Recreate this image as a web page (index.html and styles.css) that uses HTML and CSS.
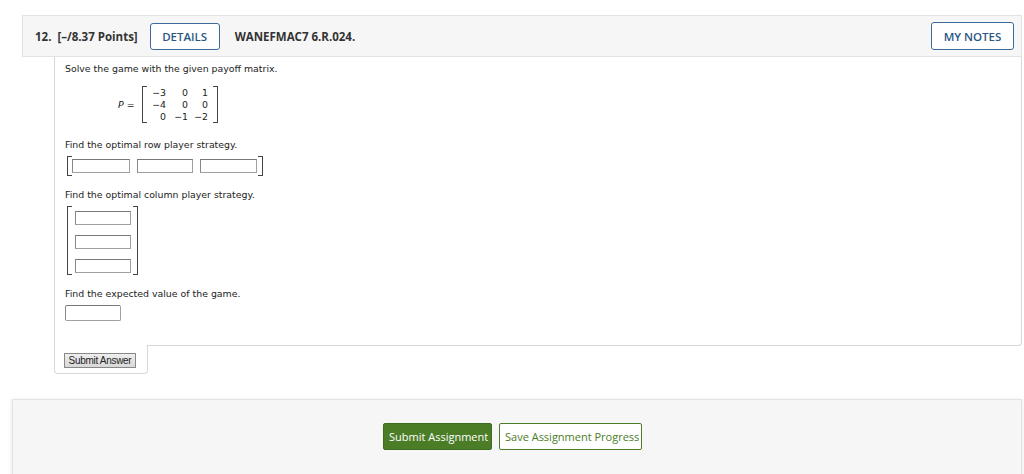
FILE: index.html
```html
<!DOCTYPE html>
<html lang="en">
  <head>
    <meta charset="UTF-8" />
    <title>WANEFMAC7 6.R.024.</title>
    <link rel="stylesheet" href="styles.css">
  </head>
  <body>
    <div class="question">
      <div class="q-header">
        <span class="q-num">12.</span>
        <span class="q-points">[&ndash;/8.37 Points]</span>
        <button class="btn-outline">DETAILS</button>
        <span class="q-code">WANEFMAC7 6.R.024.</span>
        <button class="btn-outline notes">MY NOTES</button>
      </div>

      <div class="q-body">
        <p class="q-text">Solve the game with the given payoff matrix.</p>

        <div class="payoff">
          <span class="payoff-label"><i>P</i> =</span>
          <div class="bracket payoff-matrix">
            <span>&minus;3</span><span>0</span><span>1</span>
            <span>&minus;4</span><span>0</span><span>0</span>
            <span>0</span><span>&minus;1</span><span>&minus;2</span>
          </div>
        </div>

        <p class="q-text gap-lg">Find the optimal row player strategy.</p>
        <div class="bracket row-vec">
          <input type="text" class="cell" />
          <input type="text" class="cell" />
          <input type="text" class="cell" />
        </div>

        <p class="q-text gap-md">Find the optimal column player strategy.</p>
        <div class="bracket col-vec">
          <input type="text" class="cell" />
          <input type="text" class="cell" />
          <input type="text" class="cell" />
        </div>

        <p class="q-text gap-md">Find the expected value of the game.</p>
        <input type="text" class="cell single" />
      </div>
      <div class="q-submit">
        <button class="btn-classic">Submit Answer</button>
      </div>
    </div>

    <div class="footer-bar">
      <button class="btn-green">Submit Assignment</button>
      <button class="btn-green-outline">Save Assignment Progress</button>
    </div>
  </body>
</html>
```

FILE: styles.css
```css
* {
  margin: 0;
  padding: 0;
  box-sizing: border-box;
}

body {
  font-family: "Open Sans", sans-serif;
  background: #fff;
  color: #333;
  height: 474px;
  overflow: hidden;
  padding-top: 15px;
}

.question {
  margin-left: 22px;
  width: 1000px;
}

.q-header {
  display: flex;
  align-items: center;
  height: 42px;
  padding: 0 7px 0 12px;
  background: #f6f6f6;
  border: 1px solid #e3e3e3;
  font-size: 11.5px;
  font-weight: 700;
  color: #333;
}

.q-num {
  margin-right: 6px;
}

.q-points {
  margin-right: 12px;
}

.btn-outline {
  font-family: "Open Sans", sans-serif;
  font-size: 11.5px;
  font-weight: 600;
  color: #2b5784;
  background: #fff;
  border: 1.5px solid #3b6a9b;
  border-radius: 3px;
  height: 27px;
  width: 70px;
}

.q-code {
  margin-left: 15px;
}

.notes {
  margin-left: auto;
  width: 83px;
  height: 28px;
}

.q-body {
  margin-left: 32px;
  border-left: 1px solid #d8d8d8;
  border-right: 1px solid #d8d8d8;
  border-bottom: 1px solid #d8d8d8;
  border-bottom-right-radius: 4px;
  padding: 6px 0 24px 10px;
  font-family: "DejaVu Sans", Verdana, sans-serif;
  font-size: 9.4px;
  color: #222;
}

.q-text {
  line-height: 12px;
}

.gap-lg {
  margin-top: 16px;
}

.gap-md {
  margin-top: 13px;
}

/* matrix brackets */
.bracket {
  position: relative;
}

.bracket::before,
.bracket::after {
  content: "";
  position: absolute;
  top: 0;
  bottom: 0;
  width: 4px;
  border-top: 1px solid #444;
  border-bottom: 1px solid #444;
}

.bracket::before {
  left: 0;
  border-left: 1px solid #444;
}

.bracket::after {
  right: 0;
  border-right: 1px solid #444;
}

.payoff {
  display: flex;
  align-items: center;
  margin: 11px 0 0 53px;
}

.payoff-label {
  width: 22px;
  margin-right: 2px;
}

.payoff-label i {
  font-style: italic;
}

.payoff-matrix {
  display: grid;
  grid-template-columns: 22px 22px 20px;
  justify-items: end;
  padding: 1px 8px 0 2px;
  line-height: 12px;
  width: 76px;
  height: 37px;
}

.cell {
  border: 1px solid #a0a0a0;
  border-top-color: #777;
  border-left-color: #888;
  background: #fff;
  height: 14px;
  width: 56px;
  display: block;
}

.row-vec {
  display: flex;
  align-items: center;
  gap: 7px;
  margin: 5px 0 0 2px;
  width: 196px;
  height: 20px;
  padding: 0 4px 0 5px;
}

.row-vec .cell:first-child {
  width: 58px;
}

.row-vec .cell:last-child {
  width: 57px;
}

.col-vec {
  display: flex;
  flex-direction: column;
  gap: 10px;
  margin: 5px 0 0 2px;
  width: 71px;
  height: 69px;
  padding: 5px 0 0 8px;
}

.single {
  margin-top: 5px;
  width: 56px;
  height: 16px;
  border-radius: 2px;
}

.q-submit {
  margin: -1px 0 0 32px;
  width: 94px;
  height: 29px;
  background: #fff;
  border-left: 1px solid #d8d8d8;
  border-right: 1px solid #d8d8d8;
  border-bottom: 1px solid #d8d8d8;
  border-radius: 0 0 4px 4px;
  padding: 8px 0 0 9px;
}

.btn-classic {
  display: block;
  font-family: "Liberation Sans", Arial, sans-serif;
  font-size: 10px;
  letter-spacing: -0.3px;
  line-height: 12px;
  color: #222;
  background: linear-gradient(#eee, #d8d8d8);
  border: 1px solid #888;
  height: 15px;
  width: 72px;
  padding: 0;
}

.footer-bar {
  margin: 25px 0 0 12px;
  width: 1010px;
  height: 80px;
  background: #f6f6f6;
  border: 1px solid #e3e3e3;
  box-shadow: 0 1px 4px rgba(0, 0, 0, 0.12);
  display: flex;
  justify-content: center;
  align-items: flex-start;
  gap: 7px;
  padding: 23px 9px 0 0;
}

.btn-green,
.btn-green-outline {
  font-family: "Open Sans", sans-serif;
  font-size: 11px;
  height: 27px;
  border-radius: 2px;
  padding: 0 5px;
  white-space: nowrap;
}

.btn-green {
  background: #4b7d27;
  color: #fff;
  border: 1px solid #3f6d20;
  width: 109px;
}

.btn-green-outline {
  background: #fff;
  color: #4b7d27;
  border: 1px solid #4b7d27;
  width: 143px;
}
```
